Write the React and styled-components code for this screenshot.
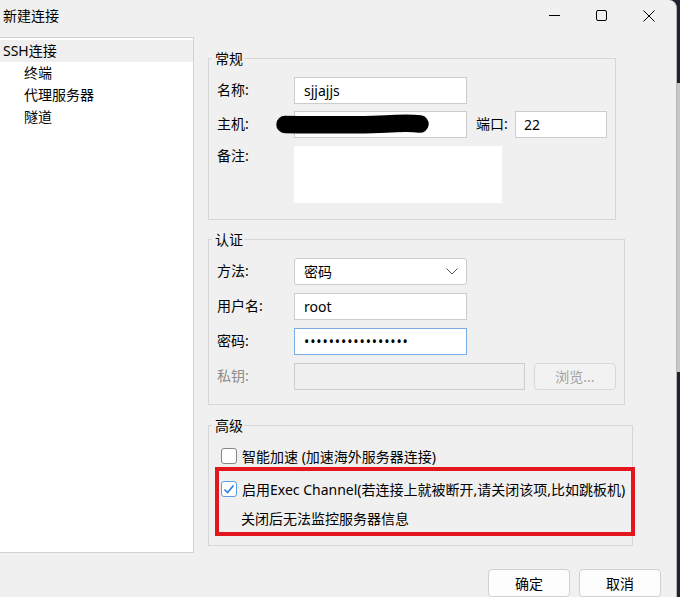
import React from 'react'
import styled, { createGlobalStyle } from 'styled-components'

const GlobalStyle = createGlobalStyle`
  html, body { margin:0; padding:0; }
  body {
    font-family: "Noto Sans", "Noto Sans CJK SC", sans-serif;
    font-size:14px;
    color:#000;
  }
  * { box-sizing:border-box; }
`;

const Page = styled.div`
  display:flex;
  height:597px;
  overflow:hidden;
  background:linear-gradient(to bottom, #1d2330 0, #1d2330 83px, #c6c6c6 83px, #c6c6c6 372px, #1d2330 372px);
`;
const Window = styled.div`
  width:677px;
  height:597px;
  background:#f0f0f0;
  border-right:1px solid #b8b8b8;
  border-top-right-radius:8px;
  display:flex;
  flex-direction:column;
  overflow:hidden;
`;
const TitleBar = styled.div`
  height:37px;
  display:flex;
  align-items:center;
  justify-content:space-between;
  padding:0 3px 5px 3px;
`;
const Title = styled.div`
  font-size:14px;
  line-height:20px;
`;
const Controls = styled.div`
  display:flex;
  padding-right:1px;
`;
const ControlBtn = styled.div`
  width:47px;
  height:30px;
  display:flex;
  align-items:center;
  justify-content:center;
`;
const Main = styled.div`
  display:flex;
  height:524px;
`;
const Tree = styled.div`
  width:194px;
  height:100%;
  background:#fff;
  border:1px solid #d2d2d2;
  border-left:none;
  padding-top:2px;
`;
const TreeItem = styled.div`
  height:22px;
  line-height:22px;
  padding-left:${p => (p.$indent ? 24 : 3)}px;
  background:${p => (p.$selected ? '#efefef' : 'transparent')};
  white-space:nowrap;
`;
const RightPane = styled.div`
  flex:1;
  padding:13px 0 0 14px;
`;
const Group = styled.fieldset`
  margin:${p => p.$mt || 0}px 0 0 0;
  padding:${p => p.$pad};
  width:${p => p.$w}px;
  border:1px solid #d6d6d6;
  min-width:0;
`;
const Legend = styled.legend`
  margin-left:3px;
  padding:0 1px 0 3px;
  line-height:18px;
`;
const Rows = styled.div`
  display:flex;
  flex-direction:column;
  gap:${p => p.$gap}px;
`;
const Row = styled.div`
  display:flex;
  align-items:${p => (p.$top ? 'flex-start' : 'center')};
  position:relative;
`;
const Label = styled.div`
  width:${p => p.$w || 85}px;
  flex-shrink:0;
  line-height:22px;
  color:${p => (p.$disabled ? '#8c8c8c' : '#000')};
  padding-left:${p => p.$pl ?? 8}px;
`;
const Input = styled.input`
  width:${p => p.$w}px;
  height:27px;
  margin:0;
  border:1px solid ${p => (p.$focus ? '#7caee6' : '#cdcdcd')};
  background:${p => (p.$disabled ? '#efefef' : '#fff')};
  padding:0 0 0 ${p => p.$pl || 9}px;
  font:inherit;
  color:#000;
  outline:none;
  letter-spacing:${p => (p.type === 'password' ? '0.9px' : 'normal')};
`;
const Memo = styled.textarea`
  width:208px;
  height:57px;
  margin:1px 0 0 0;
  border:none;
  background:#fff;
  resize:none;
  font:inherit;
  outline:none;
`;
const Select = styled.div`
  width:173px;
  height:27px;
  display:flex;
  align-items:center;
  justify-content:space-between;
  padding:0 8px 0 9px;
  background:#fff;
  border:1px solid #cdcdcd;
  border-radius:3px;
`;
const BrowseButton = styled.div`
  width:82px;
  height:27px;
  margin-left:9px;
  border:1px solid #d8d8d8;
  border-radius:4px;
  background:#f2f2f2;
  color:#a2a2a2;
  display:flex;
  align-items:center;
  justify-content:center;
`;
const Scribble = styled.svg`
  position:absolute;
  left:67px;
  top:2px;
`;
const CheckRow = styled.div`
  display:flex;
  align-items:center;
  gap:5px;
  height:22px;
  padding-left:${p => p.$pl || 0}px;
`;
const Box = styled.span`
  width:16px;
  height:16px;
  border:1px solid ${p => (p.$checked ? '#5b9fe6' : '#868686')};
  border-radius:3px;
  background:#fff;
  display:flex;
  align-items:center;
  justify-content:center;
  flex-shrink:0;
`;
const Note = styled.div`
  height:22px;
  line-height:22px;
  padding-left:20px;
  white-space:nowrap;
`;
const Highlight = styled.div`
  width:420px;
  margin-left:6px;
  border:4px solid #e4161d;
  padding:7px 0 2px 2px;
  display:flex;
  flex-direction:column;
  gap:8px;
  white-space:nowrap;
`;
const Footer = styled.div`
  display:flex;
  justify-content:flex-end;
  gap:9px;
  padding:16px 15px 0 0;
`;
const Button = styled.button`
  width:82px;
  height:28px;
  background:#fdfdfd;
  border:1px solid #d0d0d0;
  border-radius:4px;
  font:inherit;
  color:#000;
  padding:0;
`;

const Checkbox = ({ checked }) => (
  <Box $checked={checked}>
    {checked && (
      <svg width="12" height="12" viewBox="0 0 12 12">
        <polyline points="1.5,6.5 4.5,9.5 10.5,2.5" fill="none" stroke="#2b7fe0" strokeWidth="1.6" />
      </svg>
    )}
  </Box>
)

const App = () => {
  return (
    <Page>
      <GlobalStyle />
      <Window>
        <TitleBar>
          <Title>新建连接</Title>
          <Controls>
            <ControlBtn>
              <svg width="11" height="11" viewBox="0 0 11 11"><line x1="0" y1="5.5" x2="11" y2="5.5" stroke="#000" strokeWidth="1" /></svg>
            </ControlBtn>
            <ControlBtn>
              <svg width="11" height="11" viewBox="0 0 11 11"><rect x="0.5" y="0.5" width="10" height="10" rx="1.5" fill="none" stroke="#000" strokeWidth="1" /></svg>
            </ControlBtn>
            <ControlBtn>
              <svg width="12" height="12" viewBox="0 0 12 12"><path d="M0.5 0.5 L11.5 11.5 M11.5 0.5 L0.5 11.5" stroke="#000" strokeWidth="1" /></svg>
            </ControlBtn>
          </Controls>
        </TitleBar>
        <Main>
          <Tree>
            <TreeItem $selected>SSH连接</TreeItem>
            <TreeItem $indent>终端</TreeItem>
            <TreeItem $indent>代理服务器</TreeItem>
            <TreeItem $indent>隧道</TreeItem>
          </Tree>
          <RightPane>
            <Group $w={408} $pad="9px 0 16px 0">
              <Legend>常规</Legend>
              <Rows $gap={7}>
                <Row>
                  <Label>名称:</Label>
                  <Input $w={173} defaultValue="sjjajjs" readOnly />
                </Row>
                <Row>
                  <Label>主机:</Label>
                  <Input $w={173} defaultValue="" readOnly />
                  <Label $w={48} $pl={9}>端口:</Label>
                  <Input $w={92} $pl={8} defaultValue="22" readOnly />
                  <Scribble width="156" height="22" viewBox="0 0 156 22">
                    <path d="M9 11.5 C 50 12, 95 12.5, 120 10.5 C 132 10, 140 10.5, 144 11" fill="none" stroke="#000" strokeWidth="17.5" strokeLinecap="round" />
                  </Scribble>
                </Row>
                <Row $top>
                  <Label>备注:</Label>
                  <Memo readOnly />
                </Row>
              </Rows>
            </Group>
            <Group $w={417} $mt={11} $pad="9px 0 14px 0">
              <Legend>认证</Legend>
              <Rows $gap={8}>
                <Row>
                  <Label>方法:</Label>
                  <Select>
                    <span>密码</span>
                    <svg width="12" height="7" viewBox="0 0 12 7"><polyline points="0.5,0.5 6,6 11.5,0.5" fill="none" stroke="#555" strokeWidth="1" /></svg>
                  </Select>
                </Row>
                <Row>
                  <Label>用户名:</Label>
                  <Input $w={173} defaultValue="root" readOnly />
                </Row>
                <Row>
                  <Label>密码:</Label>
                  <Input $w={173} $focus type="password" defaultValue="aaaaaaaaaaaaaaaaa" readOnly />
                </Row>
                <Row>
                  <Label $disabled>私钥:</Label>
                  <Input $w={231} $disabled disabled defaultValue="" />
                  <BrowseButton>浏览...</BrowseButton>
                </Row>
              </Rows>
            </Group>
            <Group $w={425} $mt={12} $pad="10px 0 9px 0">
              <Legend>高级</Legend>
              <CheckRow $pl={12}>
                <Checkbox />
                <span>智能加速 (加速海外服务器连接)</span>
              </CheckRow>
              <Highlight>
                <CheckRow>
                  <Checkbox checked />
                  <span>启用Exec Channel(若连接上就被断开,请关闭该项,比如跳板机)</span>
                </CheckRow>
                <Note>关闭后无法监控服务器信息</Note>
              </Highlight>
            </Group>
          </RightPane>
        </Main>
        <Footer>
          <Button>确定</Button>
          <Button>取消</Button>
        </Footer>
      </Window>
    </Page>
  )
}

export default App
